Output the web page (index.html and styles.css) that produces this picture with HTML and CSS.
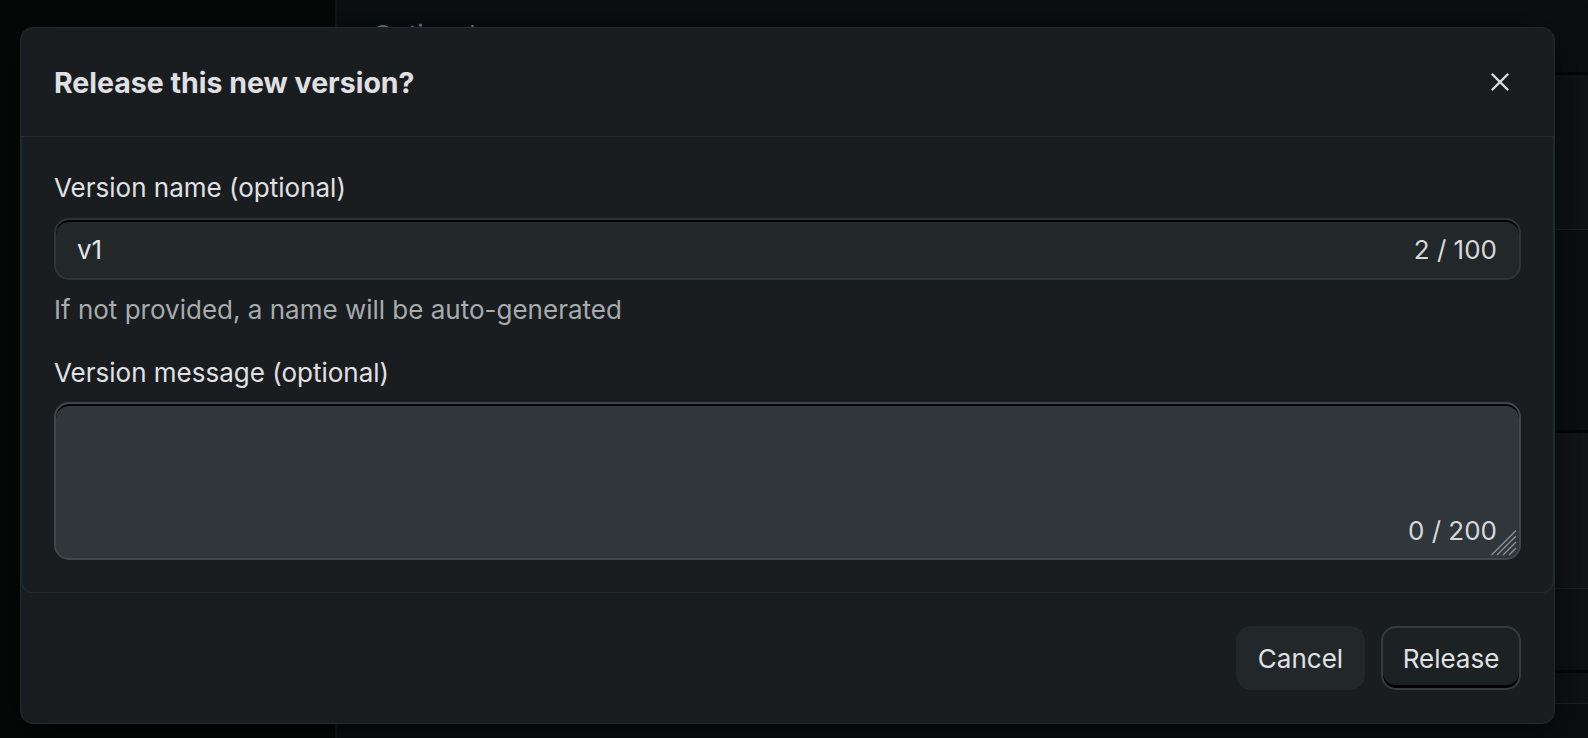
FILE: index.html
```html
<!DOCTYPE html>
<html lang="en">
<head>
<meta charset="utf-8">
<title>Release this new version?</title>
<link rel="stylesheet" href="styles.css">
</head>
<body>
<div class="app">
  <aside class="sidebar"></aside>
  <main class="panel">
    <div class="panel-title">Optional</div>
    <div class="bg-row bg-row-a"></div>
    <div class="bg-row bg-row-b"></div>
    <div class="bg-row bg-row-c"></div>
    <div class="bg-row bg-row-d"></div>
    <div class="bg-row bg-row-e"></div>
  </main>
</div>

<div class="modal" role="dialog" aria-labelledby="dlg-title">
  <header class="modal-header">
    <h2 id="dlg-title" class="modal-title">Release this new version?</h2>
    <button class="close-btn" aria-label="Close">
      <svg width="18" height="18" viewBox="0 0 18 18" aria-hidden="true">
        <path d="M1.5 1.5 L16.5 16.5 M16.5 1.5 L1.5 16.5" stroke="currentColor" stroke-width="2.4" stroke-linecap="round" fill="none"/>
      </svg>
    </button>
  </header>

  <section class="modal-body">
    <label class="field-label">Version name (optional)</label>
    <div class="input">
      <span class="input-value">v1</span>
      <span class="counter">2 / 100</span>
    </div>
    <p class="helper">If not provided, a name will be auto-generated</p>

    <label class="field-label field-label-2">Version message (optional)</label>
    <div class="textarea">
      <span class="counter textarea-counter">0 / 200</span>
      <svg class="resize-handle" width="26" height="26" viewBox="0 0 26 26" aria-hidden="true">
        <path d="M25 6 L6 25 M25 12 L12 25 M25 18 L18 25" stroke="#8b9193" stroke-width="1.4" fill="none"/>
        <path d="M25 0.5 L0.5 25" stroke="#8b9193" stroke-width="1.4" fill="none"/>
      </svg>
    </div>
  </section>

  <footer class="modal-footer">
    <button class="btn btn-cancel">Cancel</button>
    <button class="btn btn-release">Release</button>
  </footer>
</div>
</body>
</html>
```

FILE: styles.css
```css
* { box-sizing: border-box; }

html, body {
  margin: 0;
  padding: 0;
  width: 1588px;
  height: 738px;
  overflow: hidden;
  background: #060808;
  font-family: Inter, "Noto Sans", "Liberation Sans", sans-serif;
  color: #dcdde0;
}

.app {
  display: flex;
  height: 738px;
}

.sidebar {
  width: 337px;
  background: #060808;
  border-right: 2px solid #121617;
}

.panel {
  flex: 1;
  background: #0b0e0f;
  display: flex;
  flex-direction: column;
}

.panel-title {
  padding: 19px 0 0 36px;
  height: 75px;
  font-size: 26px;
  line-height: 32px;
  color: #74797c;
  background: #0b0f10;
  border-bottom: 3px solid #050606;
}

.bg-row { border-bottom: 1px solid #1a1f21; }
.bg-row-a { height: 155px; background: #0f1314; }
.bg-row-b { height: 203px; background: #0b0f10; border-bottom: 3px solid #050606; }
.bg-row-c { height: 156px; background: #111516; border-bottom: 1px solid #1c2123; }
.bg-row-d { height: 84px; background: #0e1213; border-bottom: 3px solid #050606; }
.bg-row-e { height: 31px; background: #0e1213; border-bottom: 1px solid #1c2123; }

/* Modal (overlays the page) */
.modal {
  position: absolute;
  left: 20px;
  top: 27px;
  width: 1535px;
  height: 697px;
  background: #191d20;
  border: 1px solid #1f2b2e;
  border-radius: 13px;
  display: flex;
  flex-direction: column;
  box-shadow: 0 10px 40px rgba(0, 0, 0, 0.6);
}

.modal-header {
  height: 109px;
  flex: none;
  display: flex;
  align-items: center;
  justify-content: space-between;
  padding: 0 36px 0 33px;
  border-bottom: 1px solid #1f2c2f;
}

.modal-title {
  margin: 0;
  font-size: 28.5px;
  font-weight: 700;
  color: #e0e0e4;
}

.close-btn {
  width: 36px;
  height: 36px;
  padding: 0;
  border: none;
  background: transparent;
  color: #dcdde0;
  display: flex;
  align-items: center;
  justify-content: center;
}

.modal-body {
  flex: none;
  display: flex;
  flex-direction: column;
  padding: 33px 32px 32px 32px;
  border: 1px solid #1f2c2f;
  border-top: none;
  border-radius: 0 0 12px 12px;
}

.field-label {
  font-size: 26px;
  line-height: 36px;
  color: #e0e1e4;
  margin-bottom: 12px;
}

.field-label-2 { margin-bottom: 11px; }

.input {
  height: 62px;
  display: flex;
  align-items: center;
  justify-content: space-between;
  padding: 0 22px 0 21px;
  background: #22282a;
  border: 2px solid #2f3537;
  border-radius: 15px;
  box-shadow: inset 0 2px 0 #000;
  font-size: 26px;
}

.input-value { color: #e4e5e7; }

.counter {
  color: #d6d8da;
  font-size: 26px;
}

.helper {
  margin: 12px 0 27px 0;
  font-size: 26px;
  line-height: 36px;
  color: #a6abae;
}

.textarea {
  position: relative;
  height: 158px;
  background: #30373a;
  border: 2px solid #3f474a;
  border-radius: 15px;
  box-shadow: inset 0 2px 0 #000;
}

.textarea-counter {
  position: absolute;
  right: 22px;
  bottom: 11px;
  line-height: 32px;
}

.resize-handle {
  position: absolute;
  right: 2px;
  bottom: 2px;
}

.modal-footer {
  flex: 1;
  display: flex;
  justify-content: flex-end;
  align-items: flex-start;
  gap: 16px;
  padding: 33px 33px 0 0;
}

.btn {
  height: 64px;
  font-family: Inter, "Noto Sans", "Liberation Sans", sans-serif;
  font-size: 26px;
  color: #e0e1e4;
  border-radius: 15px;
  cursor: pointer;
  padding: 0;
}

.btn-cancel {
  width: 129px;
  background: #22282a;
  border: none;
}

.btn-release {
  width: 140px;
  background: #1c2124;
  border: 2px solid #353c3f;
  box-shadow: inset 0 -3px 0 #000;
}
```
